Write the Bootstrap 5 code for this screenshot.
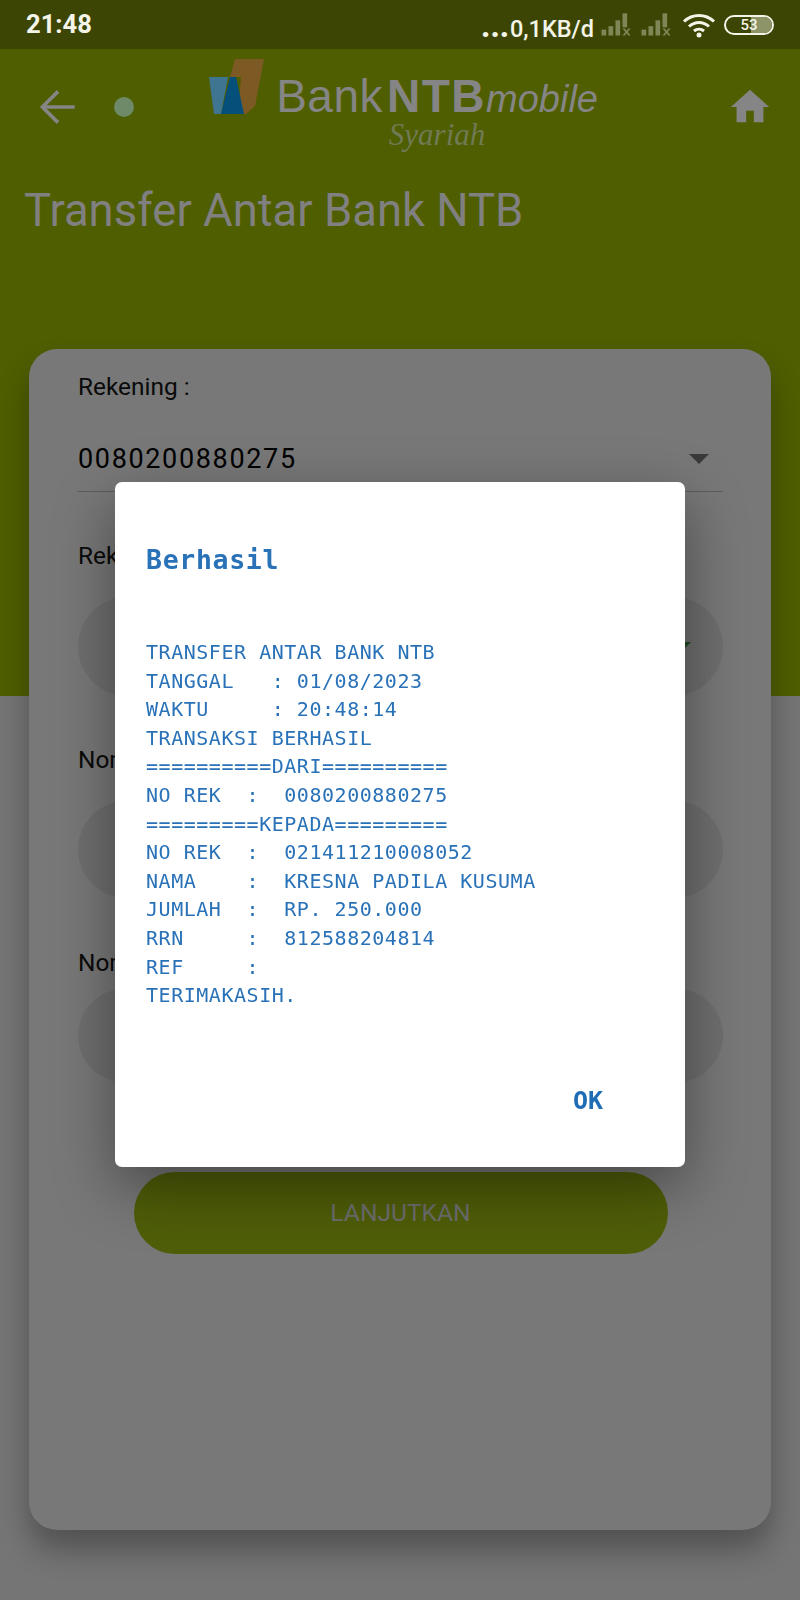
<!DOCTYPE html>
<html lang="en">
<head>
    <meta charset="UTF-8">
    <meta name="viewport" content="width=device-width, initial-scale=1.0">
    <title>Transfer Antar Bank NTB</title>
    <link href="https://cdn.jsdelivr.net/npm/bootstrap@5.3.0/dist/css/bootstrap.min.css" rel="stylesheet">
    <style>
        body {
            font-family: Roboto, "Liberation Sans", sans-serif;
            background: linear-gradient(#4f5e00 696px, #757575 696px);
            height: 1600px;
            overflow: hidden;
        }
        .status-strip {
            height: 49px;
            padding: 0 26px;
            background: #3d4505;
            color: #f4f4e8;
        }
        .status-time { font-size: 25.6px; font-weight: 700; }
        .status-net { line-height: 1; }
        .status-dots { font-size: 34px; letter-spacing: -.5px; font-weight: 700; margin-right: 3px; }
        .status-speed { font-size: 23.5px; font-weight: 500; margin-right: 6px; margin-left: -2px; }
        .sig-gap { margin-right: 9px; }
        .wifi-gap { margin: 0 8px 0 11px; }
        .batt-box {
            width: 50px;
            height: 20px;
            border: 2px solid #f4f4e8;
            overflow: hidden;
            font-size: 15px;
            font-weight: 500;
            line-height: 16px;
            text-align: center;
            position: relative;
        }
        .batt-fill { position: absolute; top: 0; bottom: 0; left: 25px; right: 0; background: #8c9468; }
        .batt-num { position: relative; }
        .top-bar { height: 116px; padding: 0 27px 0 32px; }
        .dot-mark { width: 20px; height: 20px; border-radius: 50%; background: #6e8a68; margin: 0 auto 0 32px; }
        .logo-row { margin-right: 129px; padding-top: 27px; }
        .logo-mark { margin-top: -19px; }
        .logo-words { margin-left: 10px; color: #858585; font-family: "Liberation Sans", sans-serif; font-size: 46px; line-height: 41px; white-space: nowrap; }
        .logo-bank { letter-spacing: .5px; }
        .logo-words b { letter-spacing: 1.5px; margin-left: 4px; }
        .logo-words i { font-size: 38px; }
        .logo-sub { font-family: "Liberation Serif", serif; font-style: italic; font-size: 31px; line-height: 30px; color: #707a55; text-align: center; margin-left: 10px; }
        .page-head { font-size: 45.4px; font-weight: 400; color: #808080; margin: 18px 0 0 24px; line-height: 56px; }
        .form-panel {
            margin: 110px 29px 0 29px;
            height: 1181px;
            background: #787878;
            border: 0;
            border-radius: 28px;
            box-shadow: 0 20px 30px rgba(0, 0, 0, .3);
            padding: 24px 48px 0 49px;
        }
        .field-cap { font-size: 24.4px; line-height: 28px; color: #0a0a0a; margin: 0; }
        .acct-select { height: 91px; padding: 30px 0 5px; border-bottom: 1px solid #5e5e5e; font-size: 27px; line-height: 40px; letter-spacing: 1.65px; color: #000; }
        .caret-down { width: 0; height: 0; border-left: 10px solid transparent; border-right: 10px solid transparent; border-top: 10px solid #3a3a3a; margin-right: 14px; }
        .pill-field { background: #6f6f6f; padding-right: 30px; }
        .pill-field .caret-down { border-top-color: #1e4a20; margin-right: 2px; }
        .cap-two { margin-top: 50px; }
        .cap-three { margin-top: 50px; }
        .cap-four { margin-top: 51px; }
        .pill-one { margin-top: 27px; height: 99px; }
        .pill-two { margin-top: 27px; height: 97px; }
        .pill-three { margin-top: 12px; height: 93px; }
        .go-btn { width: 534px; height: 82px; margin: 90px auto 0; background: #4f5e08; color: #6e6e6e; border: 0; font-size: 24.6px; }
        .modal-dialog.dlg-box { max-width: 570px; margin: 482px 0 0 115px; }
        .dlg-box .modal-content { border: 0; border-radius: 7px; height: 685px; box-shadow: 0 20px 60px rgba(0, 0, 0, .4); font-family: "DejaVu Sans Mono", monospace; color: #2a72b8; }
        .dlg-title { font-size: 26.5px; letter-spacing: .68px; font-weight: 700; line-height: 36px; margin: 0; padding: 60px 31px 0; }
        .dlg-text { font-family: inherit; font-size: 20px; letter-spacing: .53px; line-height: 28.6px; margin: 0; padding: 60px 31px 0; color: inherit; overflow: visible; }
        .dlg-foot { padding: 73px 82px 0 0; }
        .dlg-ok { font-family: inherit; font-size: 25px; font-weight: 700; line-height: 36px; color: #1f6eb5; padding: 0; border: 0; text-decoration: none; }
    </style>
</head>
<body>
    <div class="status-strip d-flex align-items-center">
        <span class="status-time">21:48</span>
        <div class="ms-auto d-flex align-items-center">
            <div class="status-net d-flex align-items-baseline">
                <span class="status-dots">...</span>
                <span class="status-speed">0,1KB/d</span>
            </div>
            <svg class="sig-gap" width="31" height="28" viewBox="0 0 26 24"><g fill="#7f8757"><rect x="1" y="16" width="4" height="5"/><rect x="7" y="13" width="4" height="8"/><rect x="13" y="8" width="4" height="13"/><rect x="19" y="2" width="4" height="12"/><path d="M19 15l2 0 1.500 2 1.500-2 2 0-2.500 3 2.500 3-2 0-1.500-2-1.500 2-2 0 2.500-3z"/></g></svg>
            <svg width="31" height="28" viewBox="0 0 26 24"><g fill="#7f8757"><rect x="1" y="16" width="4" height="5"/><rect x="7" y="13" width="4" height="8"/><rect x="13" y="8" width="4" height="13"/><rect x="19" y="2" width="4" height="12"/><path d="M19 15l2 0 1.500 2 1.500-2 2 0-2.500 3 2.500 3-2 0-1.500-2-1.500 2-2 0 2.500-3z"/></g></svg>
            <svg class="wifi-gap" width="34" height="26" viewBox="0 0 34 26"><g fill="none" stroke="#f4f4e8" stroke-width="3"><path d="M2 9.500C10.500 1.500 23.500 1.500 32 9.500"/><path d="M7 14.500C13 9 21 9 27 14.500"/><path d="M12 19C15 16.500 19 16.500 22 19"/></g><circle cx="17" cy="23" r="2.500" fill="#f4f4e8"/></svg>
            <div class="batt-box rounded-pill"><div class="batt-fill"></div><span class="batt-num">53</span></div>
        </div>
    </div>

    <div class="top-bar d-flex align-items-center">
        <svg width="50" height="50" viewBox="0 0 24 24" fill="none" stroke="#858585" stroke-width="1.700"><path d="M20.500 12H5"/><path d="M12.500 4.500 5 12l7.500 7.500"/></svg>
        <div class="dot-mark"></div>
        <div class="logo-row d-flex align-self-start">
            <svg class="logo-mark flex-shrink-0" width="58" height="60" viewBox="0 0 58 60"><polygon points="27,2 56,2 47,49 38,57 30,57 33,20 22,20" fill="#7d5a24"/><polygon points="1,20 20,20 13,57 6,57" fill="#3f7590"/><polygon points="22,20 28,20 36,57 13,57" fill="#05507a"/></svg>
            <div>
                <div class="logo-words"><span class="logo-bank">Bank</span><b>NTB</b><i>mobile</i></div>
                <div class="logo-sub">Syariah</div>
            </div>
        </div>
        <svg width="46" height="46" viewBox="0 0 24 24" fill="#858585"><path d="M10 20v-6h4v6h5v-8h3L12 3 2 12h3v8z"/></svg>
    </div>

    <h1 class="page-head">Transfer Antar Bank NTB</h1>

    <div class="card form-panel">
        <p class="field-cap">Rekening :</p>
        <div class="acct-select d-flex align-items-center justify-content-between">
            <span>0080200880275</span>
            <span class="caret-down"></span>
        </div>
        <p class="field-cap cap-two">Rekening Tujuan :</p>
        <div class="pill-field pill-one rounded-pill d-flex align-items-center justify-content-end"><span class="caret-down"></span></div>
        <p class="field-cap cap-three">Nomor Rekening :</p>
        <div class="pill-field pill-two rounded-pill"></div>
        <p class="field-cap cap-four">Nominal :</p>
        <div class="pill-field pill-three rounded-pill"></div>
        <button type="button" class="btn go-btn rounded-pill d-block">LANJUTKAN</button>
    </div>

    <div class="modal d-block">
        <div class="modal-dialog dlg-box">
            <div class="modal-content">
                <h5 class="dlg-title">Berhasil</h5>
                <pre class="dlg-text">TRANSFER ANTAR BANK NTB
TANGGAL   : 01/08/2023
WAKTU     : 20:48:14
TRANSAKSI BERHASIL
==========DARI==========
NO REK  :  0080200880275
=========KEPADA=========
NO REK  :  021411210008052
NAMA    :  KRESNA PADILA KUSUMA
JUMLAH  :  RP. 250.000
RRN     :  812588204814
REF     :
TERIMAKASIH.</pre>
                <div class="dlg-foot d-flex justify-content-end">
                    <button type="button" class="btn btn-link dlg-ok">OK</button>
                </div>
            </div>
        </div>
    </div>
    <script src="https://cdn.jsdelivr.net/npm/bootstrap@5.3.0/dist/js/bootstrap.bundle.min.js"></script>
</body>
</html>
